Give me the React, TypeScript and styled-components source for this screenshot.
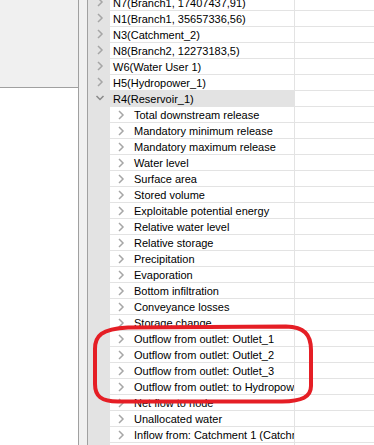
import React from "react";
import styled, { createGlobalStyle } from "styled-components";

let GlobalStyle = createGlobalStyle`
	html, body {
		margin: 0;
		padding: 0;
		background: #ffffff;
	}
	body {
		font-family: "Liberation Sans", Arial, sans-serif;
		font-size: 11px;
		color: #000;
	}
`;

let Window = styled.div`
	position: relative;
	display: flex;
	width: 374px;
	height: 445px;
	overflow: hidden;
`;

let LeftPanel = styled.div`
	display: flex;
	flex-direction: column;
	width: 78px;
	border-right: 1px solid #a0a0a0;
`;

let LeftHeader = styled.div`
	height: 87px;
	background: #f0f0f0;
	border-bottom: 1px solid #a0a0a0;
`;

let LeftBody = styled.div`
	flex: 1;
	background: #ffffff;
`;

let Splitter = styled.div`
	width: 8px;
	background: #f0f0f0;
	border-right: 1px solid #a0a0a0;
`;

let Tree = styled.div`
	flex: 1;
	overflow: hidden;
	background: #e3e3e3;
`;

let TreeBody = styled.div`
	margin-top: -6px;
`;

let Row = styled.div`
	display: flex;
	height: 16px;
`;

let Gutter = styled.div`
	width: 22px;
	flex: none;
	display: flex;
	align-items: center;
	padding-left: 7px;
	box-sizing: border-box;
`;

let NameCell = styled.div<{ $child?: boolean; $selected?: boolean }>`
	width: 185px;
	flex: none;
	box-sizing: border-box;
	display: flex;
	align-items: flex-start;
	border-top: 1px solid #e3e3e3;
	border-right: 1px solid #e3e3e3;
	background: ${(p) => (p.$selected ? "#e3e3e3" : "#ffffff")};
	padding-left: ${(p) => (p.$child ? "6px" : "3px")};
	overflow: hidden;
	white-space: nowrap;
`;

let ValueCell = styled.div`
	flex: 1;
	border-top: 1px solid #e3e3e3;
	background: #ffffff;
`;

let Label = styled.span`
	display: block;
	padding-top: 2px;
	line-height: 13px;
	white-space: nowrap;
`;

let ChildArrow = styled.span`
	display: flex;
	align-items: center;
	height: 15px;
	width: 18px;
	flex: none;
`;

let Annotation = styled.svg`
	position: absolute;
	left: 0;
	top: 0;
	pointer-events: none;
`;

let Chevron: React.FC<{ open?: boolean }> = ({ open }) => (
	<svg width="10" height="10" viewBox="0 0 10 10">
		{open ? (
			<polyline points="1.5,3 5,6.5 8.5,3" fill="none" stroke="#8a8a8a" strokeWidth="1.5" />
		) : (
			<polyline points="3,1 7,5 3,9" fill="none" stroke="#a6a6a6" strokeWidth="1.5" />
		)}
	</svg>
);

let nodes = [
	"N7(Branch1, 17407437,91)",
	"N1(Branch1, 35657336,56)",
	"N3(Catchment_2)",
	"N8(Branch2, 12273183,5)",
	"W6(Water User 1)",
	"H5(Hydropower_1)",
];

let results = [
	"Total downstream release",
	"Mandatory minimum release",
	"Mandatory maximum release",
	"Water level",
	"Surface area",
	"Stored volume",
	"Exploitable potential energy",
	"Relative water level",
	"Relative storage",
	"Precipitation",
	"Evaporation",
	"Bottom infiltration",
	"Conveyance losses",
	"Storage change",
	"Outflow from outlet: Outlet_1",
	"Outflow from outlet: Outlet_2",
	"Outflow from outlet: Outlet_3",
	"Outflow from outlet: to Hydropower_1",
	"Net flow to node",
	"Unallocated water",
	"Inflow from: Catchment 1 (Catchment_2)",
	"Inflow from: Branch 1",
];

export default function App() {
	return (
		<>
			<GlobalStyle />
			<Window>
				<LeftPanel>
					<LeftHeader />
					<LeftBody />
				</LeftPanel>
				<Splitter />
				<Tree>
					<TreeBody>
						{nodes.map((n) => (
							<Row key={n}>
								<Gutter>
									<Chevron />
								</Gutter>
								<NameCell>
									<Label>{n}</Label>
								</NameCell>
								<ValueCell />
							</Row>
						))}
						<Row>
							<Gutter>
								<Chevron open />
							</Gutter>
							<NameCell $selected>
								<Label>R4(Reservoir_1)</Label>
							</NameCell>
							<ValueCell />
						</Row>
						{results.map((r) => (
							<Row key={r}>
								<Gutter />
								<NameCell $child>
									<ChildArrow>
										<Chevron />
									</ChildArrow>
									<Label>{r}</Label>
								</NameCell>
								<ValueCell />
							</Row>
						))}
					</TreeBody>
				</Tree>
				<Annotation width="374" height="445" viewBox="0 0 374 445">
					<path
						d="M 128 327.5 L 286 326.5 C 304 327, 311 334, 311 350 L 311 386 C 311 397, 302 401, 282 401.5 L 118 401.5 C 101 401.5, 95 396, 95 384 L 95 349 C 95 336, 101 329, 128 327.5 Z"
						fill="none"
						stroke="#e51e25"
						strokeWidth="4"
					/>
				</Annotation>
			</Window>
		</>
	);
}
